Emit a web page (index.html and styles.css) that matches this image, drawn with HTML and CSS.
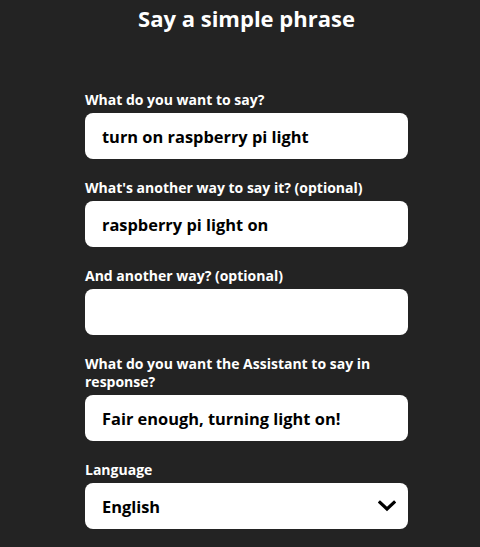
FILE: index.html
```html
<!DOCTYPE html>
<html lang="en">
<head>
<meta charset="utf-8">
<title>Say a simple phrase</title>
<link rel="stylesheet" href="styles.css">
</head>
<body>
<main class="page">
  <h1 class="title">Say a simple phrase</h1>
  <form class="form">
    <div class="field">
      <label class="label">What do you want to say?</label>
      <div class="input">turn on raspberry pi light</div>
    </div>
    <div class="field">
      <label class="label">What's another way to say it? (optional)</label>
      <div class="input">raspberry pi light on</div>
    </div>
    <div class="field">
      <label class="label">And another way? (optional)</label>
      <div class="input"></div>
    </div>
    <div class="field">
      <label class="label">What do you want the Assistant to say in response?</label>
      <div class="input">Fair enough, turning light on!</div>
    </div>
    <div class="field">
      <label class="label">Language</label>
      <div class="input select">
        <span>English</span>
        <svg class="chevron" width="18" height="12" viewBox="0 0 18 12"><path d="M2 2.5 L9 9 L16 2.5" fill="none" stroke="#000" stroke-width="3.2" stroke-linecap="square"/></svg>
      </div>
    </div>
  </form>
</main>
</body>
</html>
```
FILE: styles.css
```css
html, body {
  margin: 0;
  padding: 0;
  background: #232323;
}
body {
  font-family: "Open Sans", "Lato", sans-serif;
  color: #fff;
}
.page {
  width: 323px;
  margin-left: 85px;
  padding-top: 3px;
}
.title {
  margin: 0;
  font-size: 22px;
  font-weight: 700;
  line-height: 30px;
  text-align: center;
}
.form {
  display: flex;
  flex-direction: column;
  gap: 20px;
  margin-top: 58px;
}
.field {
  display: flex;
  flex-direction: column;
  gap: 4px;
}
.label {
  font-size: 14px;
  font-weight: 700;
  line-height: 18px;
  width: 300px;
}
.input {
  box-sizing: border-box;
  height: 46px;
  background: #fff;
  border-radius: 8px;
  color: #000;
  font-size: 16.4px;
  font-weight: 700;
  padding: 0 17px;
  display: flex;
  align-items: center;
}
.select {
  justify-content: space-between;
  padding-right: 12px;
}
```
